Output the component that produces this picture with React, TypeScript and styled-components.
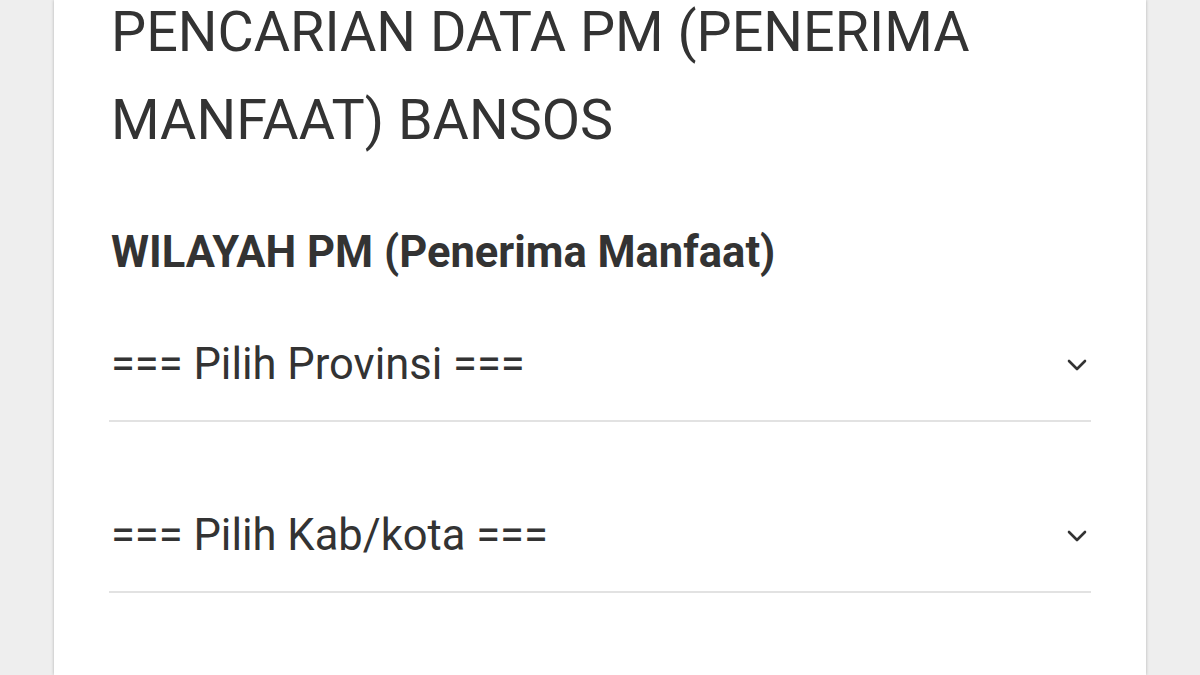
import React from "react";
import styled, { createGlobalStyle } from "styled-components";

const Global = createGlobalStyle`
  html, body { margin: 0; padding: 0; }
  body {
    background: #eeeeee;
    font-family: Roboto, "Noto Sans", "Liberation Sans", sans-serif;
    color: #333333;
    overflow: hidden;
  }
`;

const Page = styled.div`
  display: flex;
  justify-content: center;
  height: 675px;
`;

const Card = styled.div`
  width: 1092px;
  background: #ffffff;
  box-shadow: 0 0 3px rgba(0, 0, 0, 0.25);
  padding: 0 55px;
  box-sizing: border-box;
  display: flex;
  flex-direction: column;
`;

const Title = styled.h1`
  margin: -12px 0 0 2px;
  font-size: 55.7px;
  line-height: 88px;
  font-weight: 400;
  color: #333333;
`;

const Subtitle = styled.h2`
  margin: 59px 0 0 2px;
  font-size: 43.5px;
  line-height: 60px;
  font-weight: 700;
  color: #333333;
`;

const SelectRow = styled.div<{ $first?: boolean }>`
  display: flex;
  align-items: center;
  justify-content: space-between;
  margin-top: ${(p) => (p.$first ? "44.3px" : "76.2px")};
  padding: 12px 4px 28.8px 2px;
  border-bottom: 2px solid #e2e2e2;
`;

const SelectText = styled.span`
  font-size: 43.5px;
  line-height: 52px;
  color: #333333;
`;

const Chevron = () => (
  <svg width="20" height="14" viewBox="0 0 20 14" fill="none">
    <path d="M2 3 L10 11 L18 3" stroke="#333" strokeWidth="2.6" strokeLinecap="round" strokeLinejoin="round" />
  </svg>
);

export default function App() {
  return (
    <>
      <Global />
      <Page>
        <Card>
          <Title>
            PENCARIAN DATA PM (PENERIMA
            <br />
            MANFAAT) BANSOS
          </Title>
          <Subtitle>WILAYAH PM (Penerima Manfaat)</Subtitle>
          <SelectRow $first>
            <SelectText>=== Pilih Provinsi ===</SelectText>
            <Chevron />
          </SelectRow>
          <SelectRow>
            <SelectText>=== Pilih Kab/kota ===</SelectText>
            <Chevron />
          </SelectRow>
        </Card>
      </Page>
    </>
  );
}
